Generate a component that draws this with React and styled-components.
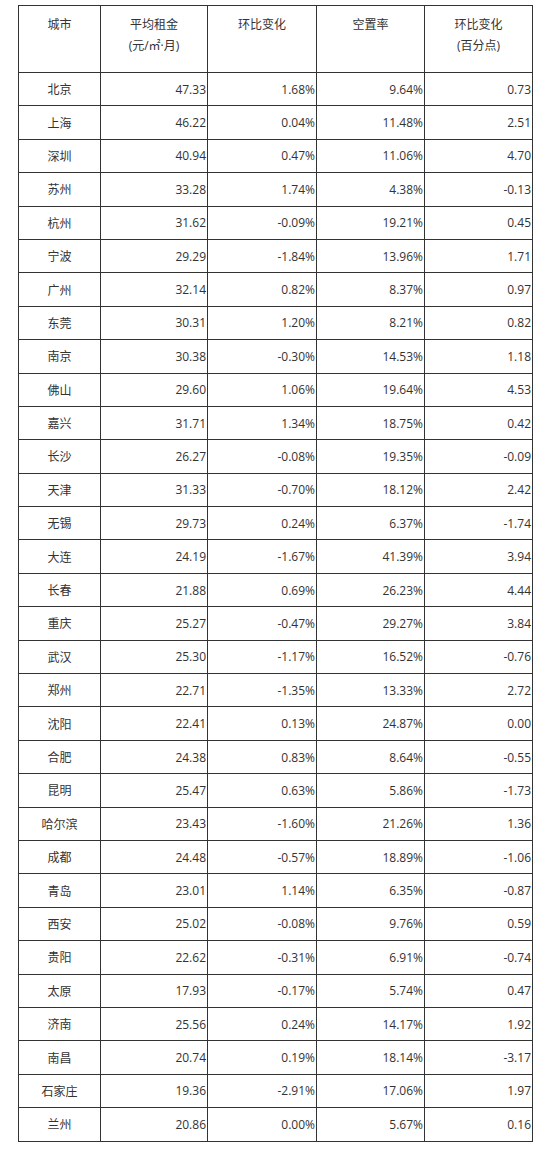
import React from "react";
import styled, { createGlobalStyle } from "styled-components";

const GlobalStyle = createGlobalStyle`
  body {
    margin: 0;
    background: #fff;
    font-family: "Open Sans", "Noto Sans CJK SC", sans-serif;
    color: #222;
  }
`;

const rows = [
  ["北京", "47.33", "1.68%", "9.64%", "0.73"],
  ["上海", "46.22", "0.04%", "11.48%", "2.51"],
  ["深圳", "40.94", "0.47%", "11.06%", "4.70"],
  ["苏州", "33.28", "1.74%", "4.38%", "-0.13"],
  ["杭州", "31.62", "-0.09%", "19.21%", "0.45"],
  ["宁波", "29.29", "-1.84%", "13.96%", "1.71"],
  ["广州", "32.14", "0.82%", "8.37%", "0.97"],
  ["东莞", "30.31", "1.20%", "8.21%", "0.82"],
  ["南京", "30.38", "-0.30%", "14.53%", "1.18"],
  ["佛山", "29.60", "1.06%", "19.64%", "4.53"],
  ["嘉兴", "31.71", "1.34%", "18.75%", "0.42"],
  ["长沙", "26.27", "-0.08%", "19.35%", "-0.09"],
  ["天津", "31.33", "-0.70%", "18.12%", "2.42"],
  ["无锡", "29.73", "0.24%", "6.37%", "-1.74"],
  ["大连", "24.19", "-1.67%", "41.39%", "3.94"],
  ["长春", "21.88", "0.69%", "26.23%", "4.44"],
  ["重庆", "25.27", "-0.47%", "29.27%", "3.84"],
  ["武汉", "25.30", "-1.17%", "16.52%", "-0.76"],
  ["郑州", "22.71", "-1.35%", "13.33%", "2.72"],
  ["沈阳", "22.41", "0.13%", "24.87%", "0.00"],
  ["合肥", "24.38", "0.83%", "8.64%", "-0.55"],
  ["昆明", "25.47", "0.63%", "5.86%", "-1.73"],
  ["哈尔滨", "23.43", "-1.60%", "21.26%", "1.36"],
  ["成都", "24.48", "-0.57%", "18.89%", "-1.06"],
  ["青岛", "23.01", "1.14%", "6.35%", "-0.87"],
  ["西安", "25.02", "-0.08%", "9.76%", "0.59"],
  ["贵阳", "22.62", "-0.31%", "6.91%", "-0.74"],
  ["太原", "17.93", "-0.17%", "5.74%", "0.47"],
  ["济南", "25.56", "0.24%", "14.17%", "1.92"],
  ["南昌", "20.74", "0.19%", "18.14%", "-3.17"],
  ["石家庄", "19.36", "-2.91%", "17.06%", "1.97"],
  ["兰州", "20.86", "0.00%", "5.67%", "0.16"],
];

const widths = [82, 107, 109, 108, 108];

const Page = styled.div`
  padding: 5px 0 0 18px;
`;

const Table = styled.table`
  border-collapse: collapse;
  table-layout: fixed;
  width: 515px;
  font-size: 12px;
`;

const HeadRow = styled.tr`
  height: 67px;
`;

const HeadCell = styled.th`
  border: 1px solid #333;
  padding: 8px 2px 0;
  vertical-align: top;
  text-align: center;
  font-weight: normal;
  line-height: 21px;
  color: #333;
`;

const Row = styled.tr`
  height: 33.4px;
`;

const Cell = styled.td`
  border: 1px solid #333;
  padding: 0 ${(p) => (p.$city ? "2px" : "1px")} 0 2px;
  text-align: ${(p) => (p.$city ? "center" : "right")};
  vertical-align: middle;
  color: #333;
`;

export default function App() {
  return (
    <Page>
      <GlobalStyle />
      <Table>
        <colgroup>
          {widths.map((w, i) => (
            <col key={i} style={{ width: w }} />
          ))}
        </colgroup>
        <thead>
          <HeadRow>
            <HeadCell>城市</HeadCell>
            <HeadCell>
              平均租金
              <br />
              (元/㎡·月)
            </HeadCell>
            <HeadCell>环比变化</HeadCell>
            <HeadCell>空置率</HeadCell>
            <HeadCell>
              环比变化
              <br />
              (百分点)
            </HeadCell>
          </HeadRow>
        </thead>
        <tbody>
          {rows.map((r) => (
            <Row key={r[0]}>
              {r.map((v, i) => (
                <Cell key={i} $city={i === 0}>
                  {v}
                </Cell>
              ))}
            </Row>
          ))}
        </tbody>
      </Table>
    </Page>
  );
}
